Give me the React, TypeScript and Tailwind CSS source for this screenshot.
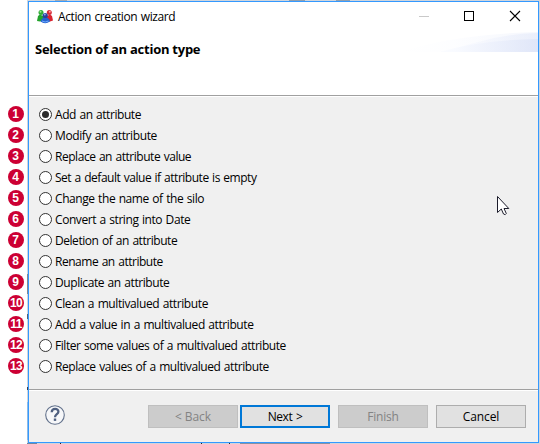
import React from 'react';

type Option = { label: string; tracking: string };

const OPTIONS: Option[] = [
  { label: 'Add an attribute', tracking: 'tracking-[-0.44px]' },
  { label: 'Modify an attribute', tracking: 'tracking-[-0.38px]' },
  { label: 'Replace an attribute value', tracking: 'tracking-[-0.46px]' },
  { label: 'Set a default value if attribute is empty', tracking: 'tracking-[-0.48px]' },
  { label: 'Change the name of the silo', tracking: 'tracking-[-0.43px]' },
  { label: 'Convert a string into Date', tracking: 'tracking-[-0.43px]' },
  { label: 'Deletion of an attribute', tracking: 'tracking-[-0.45px]' },
  { label: 'Rename an attribute', tracking: 'tracking-[-0.47px]' },
  { label: 'Duplicate an attribute', tracking: 'tracking-[-0.42px]' },
  { label: 'Clean a multivalued attribute', tracking: 'tracking-[-0.4px]' },
  { label: 'Add a value in a multivalued attribute', tracking: 'tracking-[-0.41px]' },
  { label: 'Filter some values of a multivalued attribute', tracking: 'tracking-[-0.44px]' },
  { label: 'Replace values of a multivalued attribute', tracking: 'tracking-[-0.43px]' },
];

function Badge({ n }: { n: number }) {
  return (
    <div className="flex h-[21px] items-start">
      <span className="flex size-4 items-center justify-center rounded-full bg-[#cc0033] font-['Liberation_Sans',Arial,sans-serif] text-[12px] leading-none font-bold text-white">
        <span className={n > 9 ? 'tracking-[-0.6px]' : 'pr-px'}>{n}</span>
      </span>
    </div>
  );
}

function PeopleIcon() {
  return (
    <svg width="16" height="16" viewBox="0 0 16 16">
      <path d="M0 12 1 7 3 5.500 7 7.500 7 11 3 12.500Z" fill="#23a32d" />
      <path d="M16 11.500 15 7 13 5.500 9 7.500 9 11.500 13 12.500Z" fill="#d8232f" />
      <circle cx="4" cy="3.500" r="2.500" fill="#2eaa35" />
      <circle cx="3.500" cy="2.800" r="1" fill="#9be58f" />
      <circle cx="12.300" cy="3.500" r="2.500" fill="#d52a36" />
      <circle cx="12.800" cy="2.800" r="1" fill="#ff9c9c" />
      <path d="M3.500 12.500Q4 10 6.500 8.500L10 8.500Q13 10 13 12.500 8 16 3.500 12.500Z" fill="#2463cf" />
      <circle cx="8.200" cy="6.500" r="2.600" fill="#293f9c" />
      <circle cx="7.800" cy="5.500" r="1" fill="#86a6ed" />
      <path d="M5 12Q8 14 11.500 12" stroke="#73adff" fill="none" />
    </svg>
  );
}

function TitleBar() {
  return (
    <div className="flex h-[30px] items-center pl-2">
      <PeopleIcon />
      <span className="ml-[5px] text-[12px] tracking-[-0.39px] [word-spacing:0.8px]">Action creation wizard</span>
      <svg className="ml-auto" width="120" height="30" viewBox="0 0 120 30" shapeRendering="crispEdges">
        <path d="M1 14.500H11" stroke="#c9c9c9" />
        <rect x="46.500" y="9.500" width="9" height="9" fill="none" stroke="#000" />
        <path d="M92 9 102 19M102 9 92 19" stroke="#000" shapeRendering="auto" strokeWidth="1.100" />
      </svg>
    </div>
  );
}

function Banner() {
  return (
    <div className="flex h-[63px] justify-between">
      <h1 className="pt-[8px] pl-[6px] text-[13px] leading-[18px] font-bold tracking-[-0.25px]">Selection of an action type</h1>
      <svg width="138" height="20" viewBox="0 0 138 20">
        <defs>
          <linearGradient id="sweep" gradientUnits="userSpaceOnUse" x1="0" x2="138" y1="0" y2="0">
            <stop offset="0" stopColor="#fff" />
            <stop offset=".4" stopColor="#f8faff" />
            <stop offset="1" stopColor="#dde4f8" />
          </linearGradient>
        </defs>
        <path d="M0 20Q55 2 138 0V20Z" fill="url(#sweep)" opacity=".3" />
        <path d="M40 20 78 10Q105 2 138 1V20Z" fill="url(#sweep)" opacity=".45" />
        <path d="M40 20Q80 8 138 7V20Z" fill="url(#sweep)" opacity=".8" />
      </svg>
    </div>
  );
}

function Radio({ checked }: { checked: boolean }) {
  return (
    <svg width="13" height="13" viewBox="0 0 13 13" role="radio" aria-checked={checked}>
      <circle cx="6.500" cy="6.500" r="6" fill="#fff" stroke="#333" />
      {checked && <circle cx="6.500" cy="6.500" r="3.500" fill="#2b2b2b" />}
    </svg>
  );
}

const BUTTON = 'flex h-[23px] w-[90px] items-center justify-center text-[12px] leading-none';

function Footer() {
  return (
    <div className="flex h-[51px] items-start pt-[14px] pl-[16px]">
      <svg width="20" height="20" viewBox="0 0 20 20" fill="none">
        <circle cx="10" cy="10" r="9.300" fill="#f6f7f9" stroke="#62718b" strokeWidth="1.100" />
        <path d="M6.700 7.200C6.900 2.800 13.500 3 13.400 6.800 13.300 9.300 10 9.200 10 12.300" stroke="#4f6080" strokeWidth="2.300" />
        <rect x="8.800" y="13.500" width="2.400" height="2.400" fill="#4f6080" />
      </svg>
      <button className={`${BUTTON} ml-[83px] border border-[#bfbfbf] bg-[#ccc] tracking-[-0.1px] text-[#838383]`}>&lt; Back</button>
      <button className={`${BUTTON} ml-[2px] border-2 border-[#0078d7] bg-[#e1e1e1] tracking-[-0.4px] [word-spacing:0.8px]`}>Next &gt;</button>
      <button className={`${BUTTON} ml-2 border border-[#bfbfbf] bg-[#ccc] tracking-[-0.2px] text-[#838383]`}>Finish</button>
      <button className={`${BUTTON} ml-2 border border-[#adadad] bg-[#e1e1e1] tracking-[-0.1px]`}>Cancel</button>
    </div>
  );
}

function Cursor() {
  return (
    <svg className="absolute top-[196px] left-[497px]" width="13" height="20" viewBox="0 0 13 20">
      <path d="M.5 .5V16.500L4.300 13 6.500 18Q8.500 19.500 9.300 17.500L7 12.500H11.800Z" fill="#fff" stroke="#1c1c2b" />
    </svg>
  );
}

export default function App() {
  return (
    <div className="relative flex h-[444px] w-[540px] overflow-hidden bg-white font-['Open_Sans','Noto_Sans',sans-serif] text-black">
      <div className="flex w-[27px] flex-col pt-[106px] pl-2">
        {OPTIONS.map((o, i) => <Badge key={o.label} n={i + 1} />)}
      </div>
      <div className="flex w-[513px] flex-col bg-[#d0d5dc]">
        <div className="flex h-px">
          <div className="ml-[28px] w-[12px] bg-[#a7abb2]" />
          <div className="ml-[222px] w-[16px] bg-[#92a0ae]" />
          <div className="ml-[31px] w-[14px] bg-[#92a0ae]" />
        </div>
        <div className="flex h-[442px]">
          <div className="flex w-px flex-col">
            <div className="mt-[273px] h-[20px] bg-[#85898f]" />
            <div className="mt-[20px] h-[5px] bg-[#536270]" />
            <div className="mt-[68px] h-[3px] bg-[#3c3c48]" />
            <div className="mt-[12px] h-[38px] bg-[#8fbbe6]" />
          </div>
          <main className="flex h-[442px] w-[511px] flex-col border border-[#3399ff] bg-[#f0f0f0]">
            <header className="h-[94px] border-b border-[#a0a0a0] bg-white">
              <TitleBar />
              <Banner />
            </header>
            <div className="h-[294px] border-t border-b border-t-white border-b-[#a0a0a0] pt-[7px] pl-[10px]" role="radiogroup">
              {OPTIONS.map((o, i) => (
                <div key={o.label} className="flex h-[21px] items-center">
                  <Radio checked={i === 0} />
                  <span className={`ml-[3px] text-[12px] leading-[21px] whitespace-nowrap [word-spacing:0.8px] ${o.tracking}`}>{o.label}</span>
                </div>
              ))}
            </div>
            <div className="border-t border-white">
              <Footer />
            </div>
          </main>
        </div>
        <div className="flex h-px">
          <div className="w-[10px] bg-[#6f87a0]" />
          <div className="ml-[23px] w-px bg-[#402020]" />
          <div className="ml-[140px] w-px bg-[#222]" />
          <div className="ml-[27px] w-px bg-[#222]" />
          <div className="ml-[10px] w-[90px] bg-[#8492a2]" />
        </div>
      </div>
      <Cursor />
    </div>
  );
}
